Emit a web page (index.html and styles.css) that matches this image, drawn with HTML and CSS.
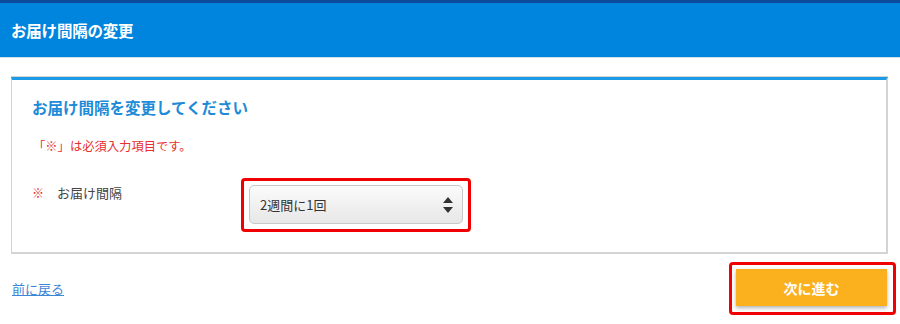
FILE: index.html
```html
<!DOCTYPE html>
<html lang="ja">
<head>
<meta charset="utf-8">
<title>お届け間隔の変更</title>
<link rel="stylesheet" href="styles.css">
</head>
<body>
<header class="page-header">
  <h1 class="page-title">お届け間隔の変更</h1>
</header>
<main class="main">
  <section class="card">
    <h2 class="card-title">お届け間隔を変更してください</h2>
    <p class="note">「※」は必須入力項目です。</p>
    <div class="form-row">
      <div class="label"><span class="req">※</span><span>お届け間隔</span></div>
      <div class="highlight highlight-select">
        <div class="select">
          <span class="select-text">2週間に1回</span>
          <svg class="select-arrows" width="10" height="20" viewBox="0 0 10 20">
            <path d="M5 2 L10 8 L0 8 Z" fill="#333"/>
            <path d="M0 12 L10 12 L5 18 Z" fill="#333"/>
          </svg>
        </div>
      </div>
    </div>
  </section>
  <div class="actions">
    <a class="back-link" href="#">前に戻る</a>
    <div class="highlight highlight-btn">
      <button class="next-btn" type="button">次に進む</button>
    </div>
  </div>
</main>
</body>
</html>
```

FILE: styles.css
```css
html, body {
  margin: 0;
  padding: 0;
  background: #fff;
}
body {
  font-family: "Noto Sans CJK JP", "Noto Sans", "Liberation Sans", sans-serif;
  color: #333;
  width: 900px;
  height: 324px;
  overflow: hidden;
}
.page-header {
  border-top: 3px solid #0b4c9a;
  background: #0085de;
  height: 54px;
  border-bottom: 1px solid #cfe0ec;
  display: flex;
  align-items: center;
  padding: 0 11px;
}
.page-title {
  margin: 0;
  color: #fff;
  font-size: 15.5px;
  font-weight: bold;
  line-height: 20px;
  letter-spacing: -0.2px;
}
.main {
  padding: 19px 0 0 0;
}
.card {
  margin: 0 12px 0 11px;
  border: 1px solid #d4d4d4;
  border-right: 2px solid #d4d4d4;
  border-bottom: 2px solid #d4d4d4;
  border-top: 3px solid #1b9be6;
  box-shadow: 0 -1px 0 #d4d4d4;
  padding: 17px 20px 20px 20px;
}
.card-title {
  margin: 0;
  color: #1e8bd8;
  font-size: 15.5px;
  font-weight: bold;
  line-height: 20px;
}
.note {
  margin: 20px 0 0 1px;
  color: #e8302e;
  font-size: 12.3px;
  line-height: 18px;
}
.form-row {
  display: flex;
  align-items: flex-start;
  margin-top: 23px;
}
.label {
  width: 209px;
  flex: none;
  display: flex;
  padding-top: 6px;
  font-size: 13px;
  line-height: 18px;
  color: #444;
}
.req {
  color: #e8302e;
  width: 25px;
  font-size: 12px;
}
.highlight {
  border: 3px solid #f00000;
  border-radius: 4px;
  padding: 4px;
}
.highlight-select {
  padding: 4px 5px 5px 5px;
}
.select {
  width: 193px;
  height: 37px;
  border: 1px solid #c8c8c8;
  border-radius: 5px;
  background: linear-gradient(#fbfbfb, #e7e7e7);
  display: flex;
  align-items: center;
  justify-content: space-between;
  padding: 0 9px 0 10px;
  box-sizing: content-box;
}
.select-text {
  font-size: 13px;
  color: #333;
}
.select-arrows {
  display: block;
}
.actions {
  display: flex;
  align-items: center;
  justify-content: space-between;
  padding: 8px 4px 0 12px;
}
.back-link {
  color: #3b86d6;
  font-size: 13px;
  text-decoration: underline;
}
.highlight-btn {
  padding: 4px 6px 6px 4px;
}
.next-btn {
  display: block;
  width: 151px;
  height: 37px;
  border: none;
  background: #fbb01e;
  color: #fff;
  font-family: inherit;
  font-size: 14px;
  font-weight: bold;
  box-shadow: 0 2px 4px rgba(0, 0, 0, 0.3);
  cursor: pointer;
}
```
